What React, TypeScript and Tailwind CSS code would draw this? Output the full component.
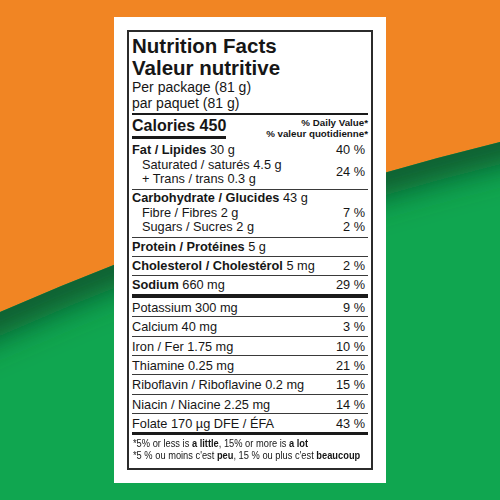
import React from "react";

function Row({ label, pct, lower }: { label: React.ReactNode; pct?: string; lower?: boolean }) {
  return (
    <div
      className={
        lower
          ? "flex justify-between whitespace-nowrap pt-[1px] leading-[17.33px]"
          : "flex justify-between whitespace-nowrap h-[18px] leading-[18px]"
      }
    >
      <div>{label}</div>
      <div className="pr-[3px]">{pct}</div>
    </div>
  );
}

function Thin() {
  return <div className="h-px bg-[#3a3a3a]" />;
}

export default function App() {
  const edge = "M0 312 Q250 203 500 142 L500 500 L0 500 Z";
  return (
    <div className="relative w-[500px] h-[500px] overflow-hidden bg-[#f18523] font-['Liberation_Sans',Arial,sans-serif]">
      <svg className="absolute inset-0" width="500" height="500" viewBox="0 0 500 500">
        <defs>
          <clipPath id="gclip">
            <path d={edge} />
          </clipPath>
          <filter id="blur" x="-30%" y="-100%" width="160%" height="300%">
            <feGaussianBlur stdDeviation="16" />
          </filter>
        </defs>
        <path d={edge} fill="#10a650" />
        <g clipPath="url(#gclip)">
          <path
            d="M-60 338 L0 312 Q250 203 500 142 L560 127"
            stroke="#08582f"
            strokeWidth="44"
            fill="none"
            filter="url(#blur)"
          />
        </g>
      </svg>

      <div className="relative flex justify-center pt-[17px]">
        <div className="w-[272px] h-[466px] bg-white p-[13px]">
          <div className="h-[440px] border-2 border-[#2b2b2b] px-[3px] text-[#161616]">
            {/* Title */}
            <div className="pt-[2.5px] text-[20.5px] font-bold leading-[22px] whitespace-nowrap">
              <div>Nutrition Facts</div>
              <div>Valeur nutritive</div>
            </div>
            <div className="mt-[1.8px] text-[14px] leading-[15.6px] whitespace-nowrap">
              <div>Per package (81 g)</div>
              <div>par paquet (81 g)</div>
            </div>
            <div className="mt-[1.5px] h-[2px] bg-[#1a1a1a]" />

            {/* Calories */}
            <div className="flex justify-between items-start">
              <div className="inline-flex flex-col pt-[2.4px]">
                <div className="text-[16px] font-bold leading-[18px] whitespace-nowrap">Calories 450</div>
                <div className="mt-[1px] h-[3px] bg-[#1a1a1a]" />
              </div>
              <div className="pt-[3.5px] text-right text-[9.75px] font-bold leading-[10.5px] whitespace-nowrap">
                <div>% Daily Value*</div>
                <div>% valeur quotidienne*</div>
              </div>
            </div>

            <div className="text-[12.75px]">
              {/* Fat group */}
              <div className="pt-[4px] pb-[2px] leading-[14.5px] whitespace-nowrap">
                <div className="flex justify-between">
                  <div>
                    <span className="font-bold">Fat / Lipides</span> 30 g
                  </div>
                  <div className="pr-[3px]">40 %</div>
                </div>
                <div className="flex justify-between">
                  <div className="pl-[10px]">
                    <div>Saturated / saturés 4.5 g</div>
                    <div>+ Trans / trans 0.3 g</div>
                  </div>
                  <div className="self-center pr-[3px]">24 %</div>
                </div>
              </div>
              <Thin />

              {/* Carb group */}
              <div className="pt-[1.5px] pb-[2px] leading-[14.5px] whitespace-nowrap">
                <div>
                  <span className="font-bold">Carbohydrate / Glucides</span> 43 g
                </div>
                <div className="flex justify-between">
                  <div className="pl-[10px]">Fibre / Fibres 2 g</div>
                  <div className="pr-[3px]">7 %</div>
                </div>
                <div className="flex justify-between">
                  <div className="pl-[10px]">Sugars / Sucres 2 g</div>
                  <div className="pr-[3px]">2 %</div>
                </div>
              </div>
              <Thin />

              <Row label={<><span className="font-bold">Protein / Protéines</span> 5 g</>} />
              <Thin />
              <Row label={<><span className="font-bold">Cholesterol / Cholestérol</span> 5 mg</>} pct="2 %" />
              <Thin />
              <Row label={<><span className="font-bold">Sodium</span> 660 mg</>} pct="29 %" />
              <div className="h-[4px] bg-[#1a1a1a]" />

              <Row lower label="Potassium 300 mg" pct="9 %" />
              <Thin />
              <Row lower label="Calcium 40 mg" pct="3 %" />
              <Thin />
              <Row lower label="Iron / Fer 1.75 mg" pct="10 %" />
              <Thin />
              <Row lower label="Thiamine 0.25 mg" pct="21 %" />
              <Thin />
              <Row lower label="Riboflavin / Riboflavine 0.2 mg" pct="15 %" />
              <Thin />
              <Row lower label="Niacin / Niacine 2.25 mg" pct="14 %" />
              <Thin />
              <Row lower label="Folate 170 µg DFE / ÉFA" pct="43 %" />
              <div className="h-[3px] bg-[#1a1a1a]" />
            </div>

            {/* Footnote */}
            <div className="pt-[1.5px] pl-[1px] text-[11px] leading-[12.3px] whitespace-nowrap">
              <div className="origin-left scale-x-[0.845]">
                *5% or less is <span className="font-bold">a little</span>, 15% or more is{" "}
                <span className="font-bold">a lot</span>
              </div>
              <div className="origin-left scale-x-[0.845]">
                *5 % ou moins c'est <span className="font-bold">peu</span>, 15 % ou plus c'est{" "}
                <span className="font-bold">beaucoup</span>
              </div>
            </div>
          </div>
        </div>
      </div>
    </div>
  );
}
